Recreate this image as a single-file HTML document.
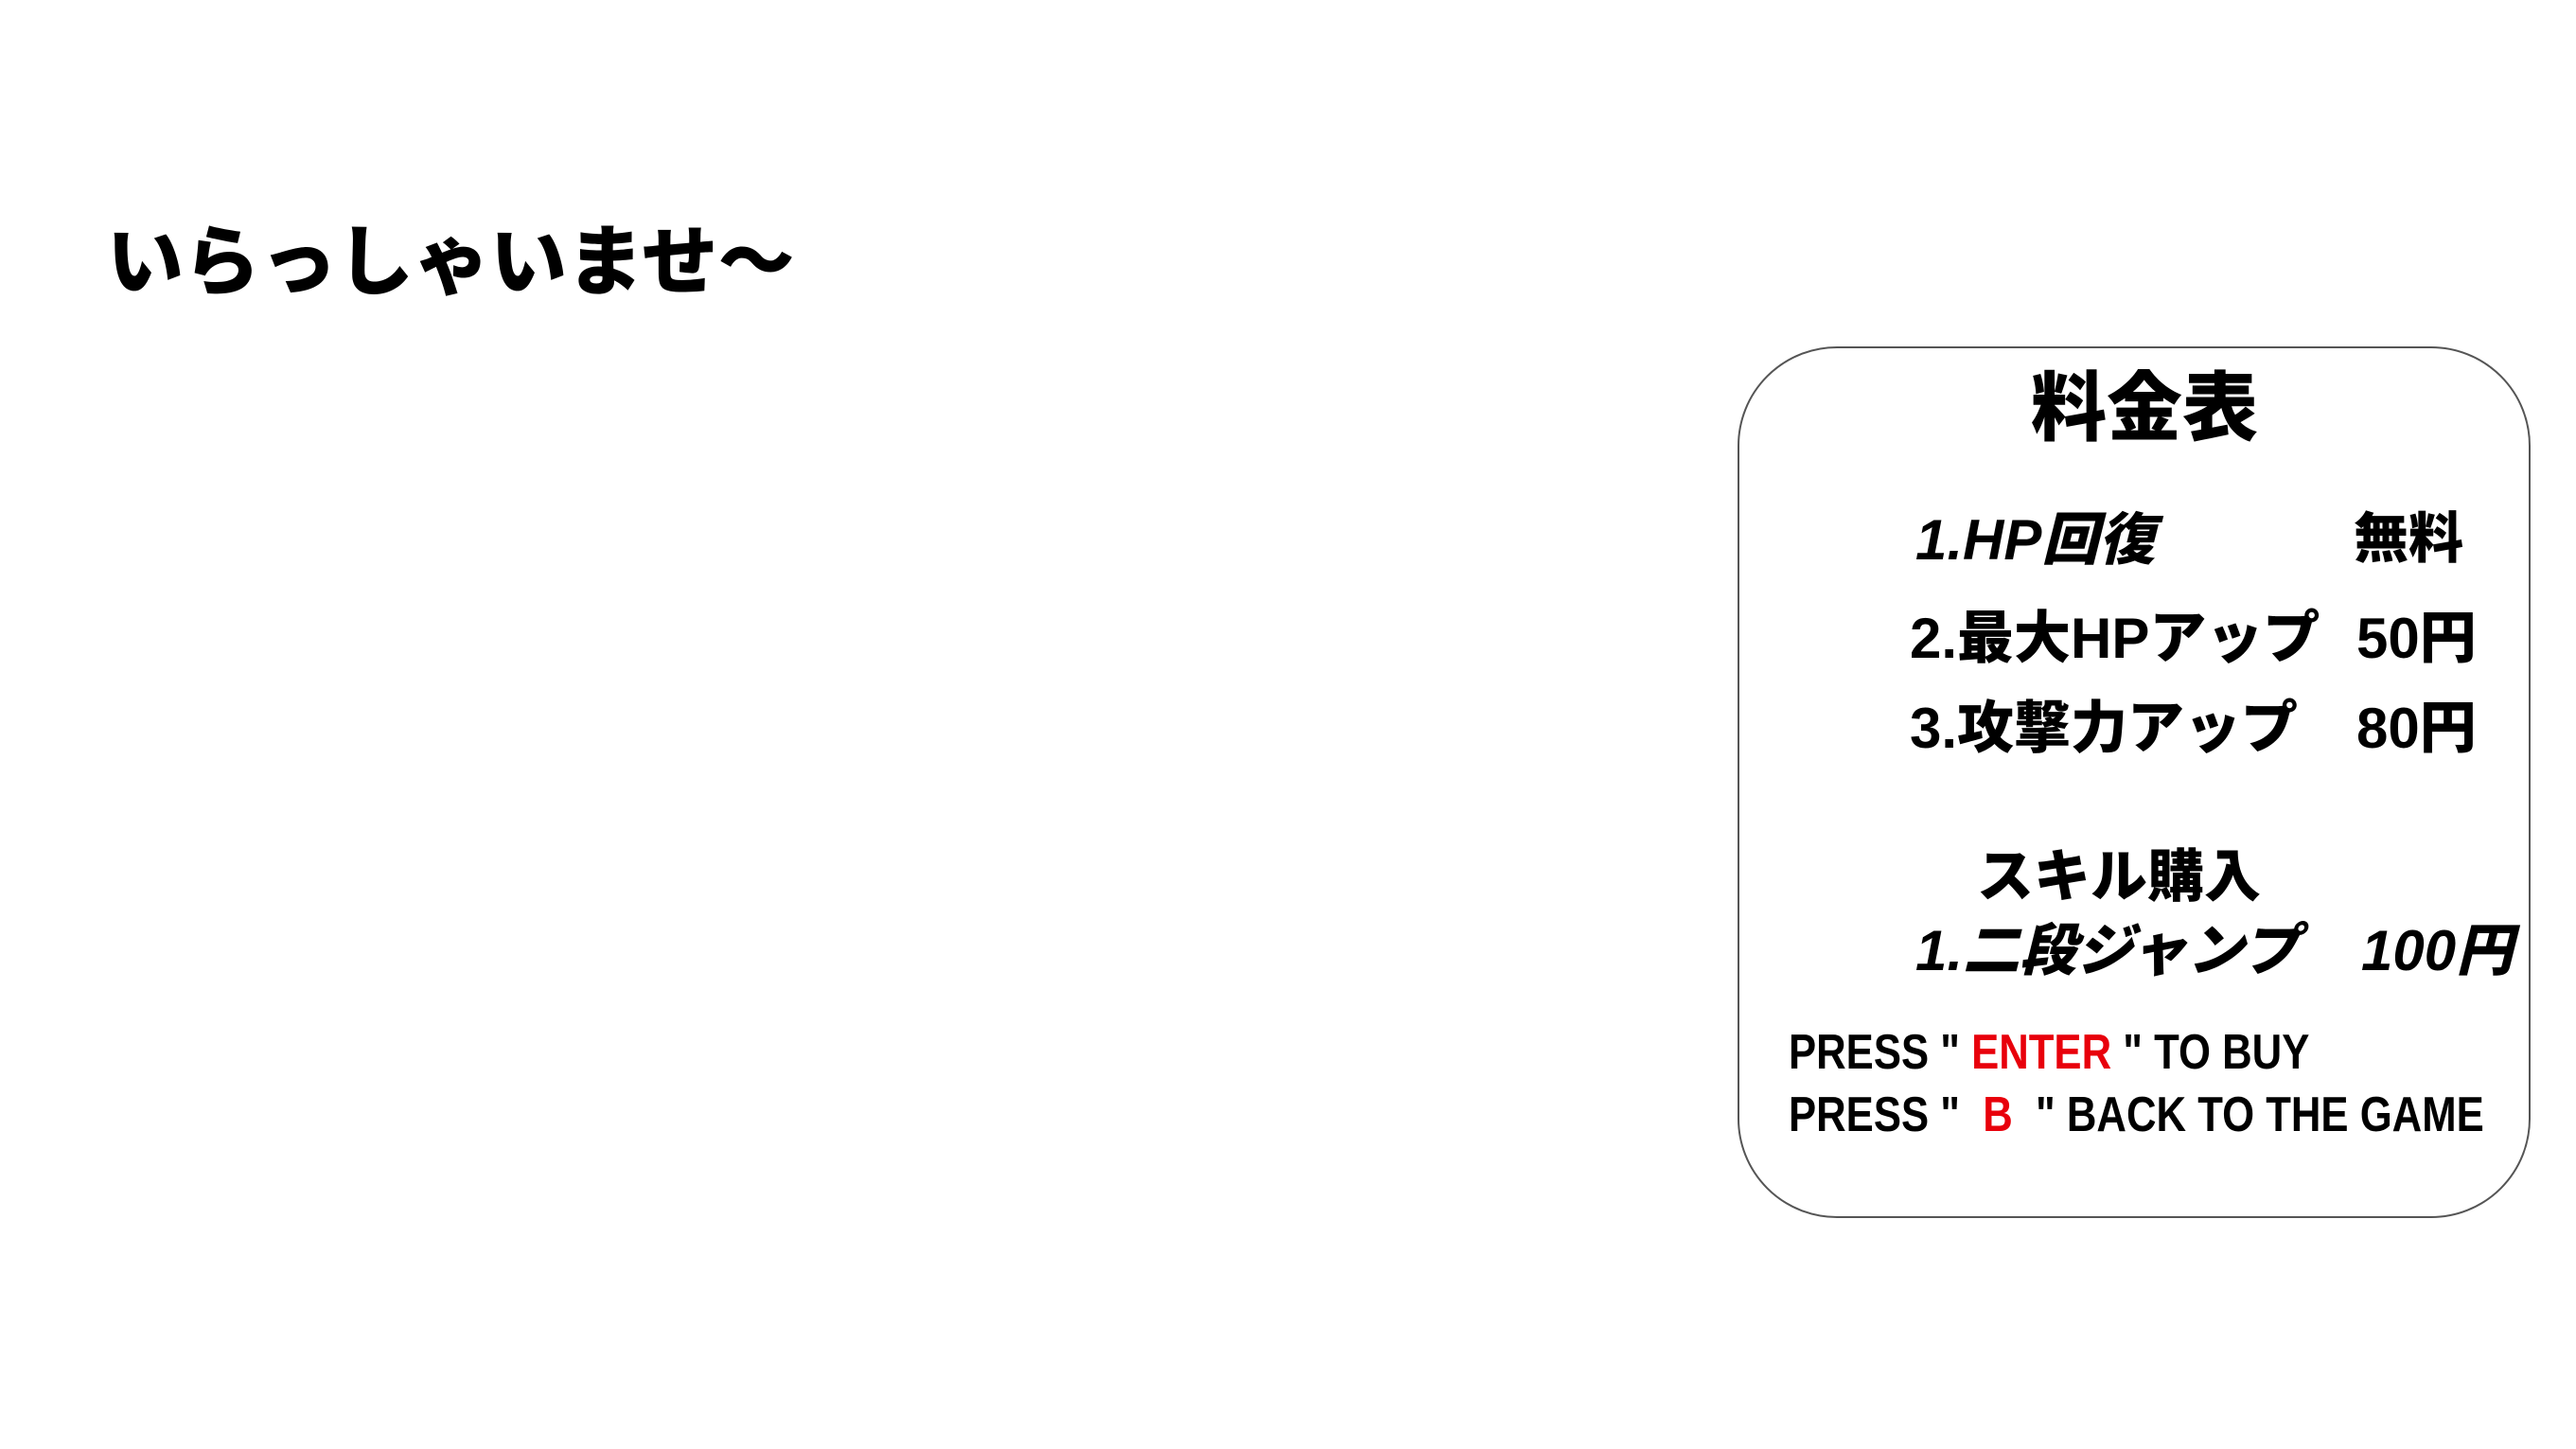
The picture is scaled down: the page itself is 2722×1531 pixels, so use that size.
<!DOCTYPE html>
<html><head><meta charset="utf-8"><style>
html,body{margin:0;padding:0;background:#fff;width:2722px;height:1531px;overflow:hidden}
.t{position:absolute;white-space:nowrap;font-family:"Liberation Sans","Noto Sans CJK JP",sans-serif;font-weight:900;color:#000;line-height:1}
.box{position:absolute;left:1836px;top:366px;width:838px;height:921px;border:2px solid #555;border-radius:105px;box-sizing:border-box}
.p{font-family:"Liberation Sans Narrow","Liberation Sans",sans-serif;font-weight:bold;font-size:52px;transform-origin:left center;transform:scaleX(0.84)}
.r{color:#e8000b}
</style></head><body>
<div class="t" style="left:113px;top:238px;font-size:81px;letter-spacing:0px">いらっしゃいませ～</div>
<div class="box"></div>
<div class="t" style="left:2146px;top:392px;font-size:80px">料金表</div>
<div class="t" style="left:2024px;top:541px;font-size:60px;font-style:italic">1.HP回復</div>
<div class="t" style="left:2487px;top:541px;font-size:58px">無料</div>
<div class="t" style="left:2018px;top:645px;font-size:60px">2.最大HPアップ</div>
<div class="t" style="left:2490px;top:645px;font-size:60px">50円</div>
<div class="t" style="left:2018px;top:740px;font-size:60px">3.攻撃力アップ</div>
<div class="t" style="left:2490px;top:740px;font-size:60px">80円</div>
<div class="t" style="left:2089px;top:897px;font-size:60px">スキル購入</div>
<div class="t" style="left:2024px;top:975px;font-size:60px;font-style:italic">1.二段ジャンプ</div>
<div class="t" style="left:2495px;top:975px;font-size:60px;font-style:italic">100円</div>
<div class="t p" style="left:1890px;top:1086px">PRESS " <span class="r">ENTER</span> " TO BUY</div>
<div class="t p" style="left:1890px;top:1152px">PRESS "&nbsp; <span class="r">B</span> &nbsp;" BACK TO THE GAME</div>
</body></html>
